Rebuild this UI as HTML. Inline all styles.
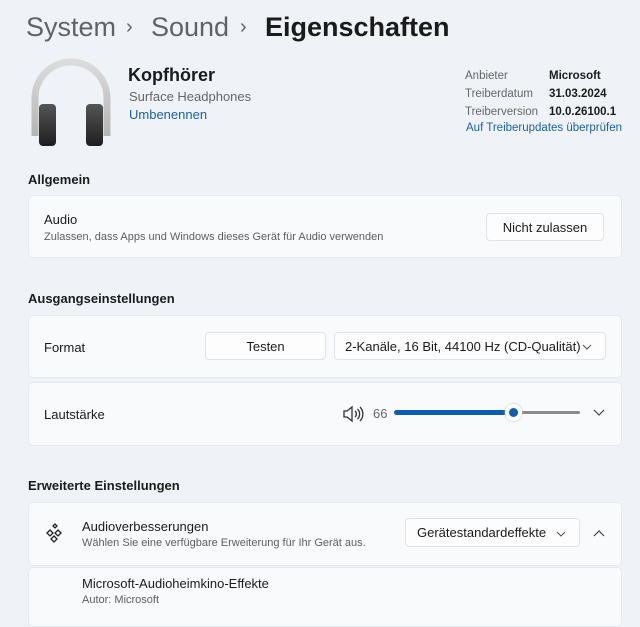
<!DOCTYPE html>
<html><head><meta charset="utf-8"><style>
*{margin:0;padding:0;box-sizing:border-box}
body{width:640px;height:613px;overflow:hidden;background:#eff3f8;font-family:"Liberation Sans",sans-serif;color:#1b1b1b;position:relative}
.a{position:absolute;white-space:nowrap}
.card{position:absolute;left:28px;width:594px;background:#f9fafc;border:1px solid #e6e9ee;border-radius:5px}
.btn{position:absolute;background:#fdfdfe;border:1px solid #e1e3e6;border-radius:4px;font-size:13px;color:#1b1b1b;display:flex;align-items:center}
.h{font-size:13px;font-weight:bold}
.g{color:#666}
.s{font-size:11px;color:#5e5e5e}
</style></head><body>
<div class="a" style="left:26px;top:12px;font-size:27px;color:#5f6266">System</div>
<div class="a" style="left:126px;top:16px;font-size:20px;color:#5f6266">›</div>
<div class="a" style="left:151px;top:12px;font-size:27px;color:#5f6266">Sound</div>
<div class="a" style="left:240px;top:16px;font-size:20px;color:#5f6266">›</div>
<div class="a" style="left:265px;top:12px;font-size:27px;font-weight:bold;color:#1b1b1b">Eigenschaften</div>
<svg class="a" style="left:28px;top:56px" width="86" height="92" viewBox="0 0 86 92">
<defs><linearGradient id="cup" x1="0" y1="0" x2="0" y2="1"><stop offset="0" stop-color="#555"/><stop offset="1" stop-color="#1e1e1e"/></linearGradient>
<linearGradient id="band" x1="0" y1="0" x2="0" y2="1"><stop offset="0" stop-color="#dcdcdc"/><stop offset="1" stop-color="#b4b4b4"/></linearGradient></defs>
<path d="M7 80 V42 A36 36 0 0 1 79 42 V80" fill="none" stroke="url(#band)" stroke-width="7"/>
<rect x="11" y="48" width="17" height="42" rx="4" fill="url(#cup)"/>
<rect x="58" y="48" width="17" height="42" rx="4" fill="url(#cup)"/>
</svg>
<div class="a" style="left:128px;top:65px;font-size:18px;font-weight:bold">Kopfhörer</div>
<div class="a g" style="left:129px;top:89px;font-size:13px">Surface Headphones</div>
<div class="a" style="left:129px;top:107px;font-size:13px;color:#1a5fb4">Umbenennen</div>
<div class="a g" style="left:465px;top:67px;font-size:11.5px;line-height:18px">Anbieter<br>Treiberdatum<br>Treiberversion</div>
<div class="a" style="left:549px;top:67px;font-size:11.5px;line-height:18px;font-weight:bold">Microsoft<br>31.03.2024<br>10.0.26100.1</div>
<div class="a" style="left:466px;top:122px;font-size:11.5px;color:#1a5fb4">Auf Treiberupdates überprüfen</div>

<div class="a h" style="left:28px;top:172px">Allgemein</div>
<div class="card" style="top:195px;height:63px"></div>
<div class="a" style="left:44px;top:212px;font-size:13px">Audio</div>
<div class="a s" style="left:44px;top:231px">Zulassen, dass Apps und Windows dieses Gerät für Audio verwenden</div>
<div class="btn" style="left:486px;top:213px;width:118px;height:28px;justify-content:center">Nicht zulassen</div>

<div class="a h" style="left:28px;top:291px">Ausgangseinstellungen</div>
<div class="card" style="top:315px;height:63px"></div>
<div class="a" style="left:44px;top:340px;font-size:13px">Format</div>
<div class="btn" style="left:205px;top:332px;width:121px;height:28px;justify-content:center">Testen</div>
<div class="btn" style="left:334px;top:332px;width:272px;height:28px;padding-left:10px">2-Kanäle, 16 Bit, 44100 Hz (CD-Qualität)<svg style="position:absolute;right:13px;top:11px" width="10" height="6"><path d="M1 1l4 4 4-4" fill="none" stroke="#555" stroke-width="1.1"/></svg></div>
<div class="card" style="top:382px;height:64px"></div>
<div class="a" style="left:44px;top:407px;font-size:13px">Lautstärke</div>
<svg class="a" style="left:342px;top:405px" width="22" height="18" viewBox="0 0 22 18"><path d="M2 6h3l5-4v14l-5-4H2z" fill="none" stroke="#333" stroke-width="1.3"/><path d="M13 6a4 4 0 0 1 0 6M15.5 4a7 7 0 0 1 0 10M18 2a10 10 0 0 1 0 14" fill="none" stroke="#333" stroke-width="1.3"/></svg>
<div class="a g" style="left:373px;top:406px;font-size:13px">66</div>
<div class="a" style="left:394px;top:411px;width:186px;height:3px;background:#8a8a8a;border-radius:2px"></div>
<div class="a" style="left:394px;top:410px;width:119px;height:5px;background:#0a5fb4;border-radius:3px"></div>
<div class="a" style="left:505px;top:404px;width:17px;height:17px;border-radius:50%;background:#fff;box-shadow:0 0 2px #bbb"></div>
<div class="a" style="left:509px;top:408px;width:9px;height:9px;border-radius:50%;background:#0a5fb4"></div>
<svg class="a" style="left:593px;top:409px" width="12" height="8"><path d="M1 1l5 5 5-5" fill="none" stroke="#444" stroke-width="1.2"/></svg>

<div class="a h" style="left:28px;top:478px">Erweiterte Einstellungen</div>
<div class="card" style="top:502px;height:64px"></div>
<svg class="a" style="left:45px;top:522px" width="20" height="22" viewBox="0 0 20 22"><g fill="none" stroke="#222" stroke-width="1.3"><path d="M10 2l2 2-2 2-2-2z"/><path d="M5 8l3 3-3 3-3-3z"/><path d="M13 8l3 3-3 3-3-3z"/><path d="M9 14l3 3-3 3-3-3z"/></g></svg>
<div class="a" style="left:82px;top:519px;font-size:13px">Audioverbesserungen</div>
<div class="a s" style="left:82px;top:537px">Wählen Sie eine verfügbare Erweiterung für Ihr Gerät aus.</div>
<div class="btn" style="left:405px;top:518px;width:175px;height:29px;padding-left:11px">Gerätestandardeffekte<svg style="position:absolute;right:13px;top:12px" width="10" height="6"><path d="M1 1l4 4 4-4" fill="none" stroke="#555" stroke-width="1.1"/></svg></div>
<svg class="a" style="left:593px;top:529px" width="12" height="8"><path d="M1 7l5-5 5 5" fill="none" stroke="#444" stroke-width="1.2"/></svg>
<div class="card" style="top:567px;height:60px"></div>
<div class="a" style="left:82px;top:576px;font-size:13px">Microsoft-Audioheimkino-Effekte</div>
<div class="a s" style="left:82px;top:594px">Autor: Microsoft</div>
</body></html>
